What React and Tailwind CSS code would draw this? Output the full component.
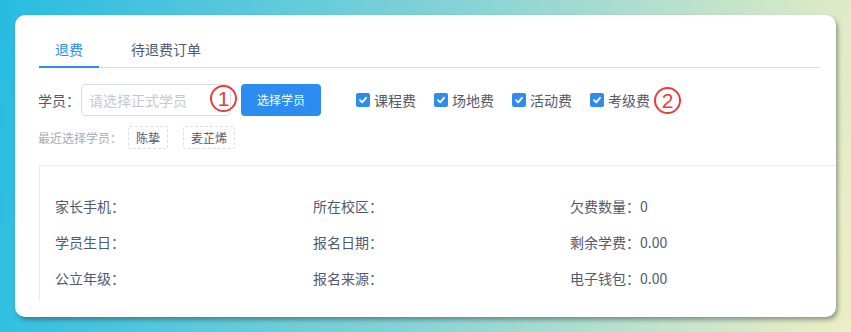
import React from "react";

const font = { fontFamily: '"Noto Sans CJK SC", "Noto Sans", sans-serif' };

function Check({ label }) {
  return (
    <label className="flex items-center mr-[18px]">
      <span className="w-[14px] h-[14px] rounded-[2px] bg-[#2d8cf0] flex items-center justify-center">
        <svg width="10" height="10" viewBox="0 0 10 10">
          <path d="M2 5.2 L4.2 7.3 L8 2.8" fill="none" stroke="#fff" strokeWidth="1.8" strokeLinecap="round" strokeLinejoin="round" />
        </svg>
      </span>
      <span className="ml-[4px] text-[14px] text-[#515a6e]">{label}</span>
    </label>
  );
}

function Mark({ n }) {
  return (
    <span className="w-[27px] h-[27px] rounded-full border-2 border-[#ec3b3d] text-[#ec3b3d] flex items-center justify-center text-[21px] leading-none bg-transparent" style={{ fontFamily: '"Liberation Sans", sans-serif' }}>
      {n}
    </span>
  );
}

function Info({ label, value }) {
  return (
    <div className="h-[36px] flex items-center text-[14px] text-[#515a6e]">
      {label}：{value}
    </div>
  );
}

export default function App() {
  return (
    <div
      className="w-[851px] h-[332px] bg-[linear-gradient(100deg,#27bce2_0%,#84d2d6_50%,#eeeec4_100%)] pt-[15px] pl-[15px]"
      style={font}
    >
      <div className="w-[821px] h-[302px] bg-white rounded-[10px] shadow-[2px_3px_4px_rgba(40,60,60,0.45)] overflow-hidden pt-[16px] pl-[24px] pr-[15px]">
        {/* tabs */}
        <div className="flex border-b border-[#dcdee2] h-[37px]">
          <div className="relative px-[16px] h-[36px] flex items-center text-[14px] text-[#2d8cf0] mr-[16px]">
            退费
            <span className="absolute left-0 right-0 bottom-[-1px] h-[2px] bg-[#2d8cf0]" />
          </div>
          <div className="px-[16px] h-[36px] flex items-center text-[14px] text-[#515a6e]">待退费订单</div>
        </div>

        {/* form row */}
        <div className="mt-[16px] h-[32px] flex items-center">
          <span className="text-[14px] text-[#515a6e] w-[43px] -ml-[1px]">学员：</span>
          <div className="relative w-[150px] h-[32px] border border-[#dcdee2] rounded-[4px] flex items-center px-[7px] text-[14px] text-[#c5c8ce]">
            请选择正式学员
            <span className="absolute left-[128px] top-[0px]">
              <Mark n="1" />
            </span>
          </div>
          <button className="ml-[10px] w-[80px] h-[32px] rounded-[4px] bg-[#2d8cf0] text-white text-[12px]">选择学员</button>
          <div className="ml-[35px] flex items-center">
            <Check label="课程费" />
            <Check label="场地费" />
            <Check label="活动费" />
            <div className="flex items-center">
              <Check label="考级费" />
              <span className="-ml-[14px]">
                <Mark n="2" />
              </span>
            </div>
          </div>
        </div>

        {/* recent */}
        <div className="mt-[10px] flex items-center h-[23px]">
          <span className="text-[12px] text-[#a8abb2] -ml-[1px] w-[90px]">最近选择学员：</span>
          <span className="h-[23px] px-[7px] border border-dashed border-[#dcdee2] rounded-[2px] text-[12px] text-[#515a6e] flex items-center">陈挚</span>
          <span className="ml-[15px] h-[23px] px-[7px] border border-dashed border-[#dcdee2] rounded-[2px] text-[12px] text-[#515a6e] flex items-center">麦芷烯</span>
        </div>

        {/* info box */}
        <div className="mt-[16px] -mr-[15px] h-[136px] border-t border-l border-[#e8eaec] pl-[15px] pt-[22px] overflow-hidden">
          <div className="grid grid-cols-[258px_257px_1fr]">
            <Info label="家长手机" value="" />
            <Info label="所在校区" value="" />
            <Info label="欠费数量" value="0" />
            <Info label="学员生日" value="" />
            <Info label="报名日期" value="" />
            <Info label="剩余学费" value="0.00" />
            <Info label="公立年级" value="" />
            <Info label="报名来源" value="" />
            <Info label="电子钱包" value="0.00" />
          </div>
        </div>
      </div>
    </div>
  );
}
